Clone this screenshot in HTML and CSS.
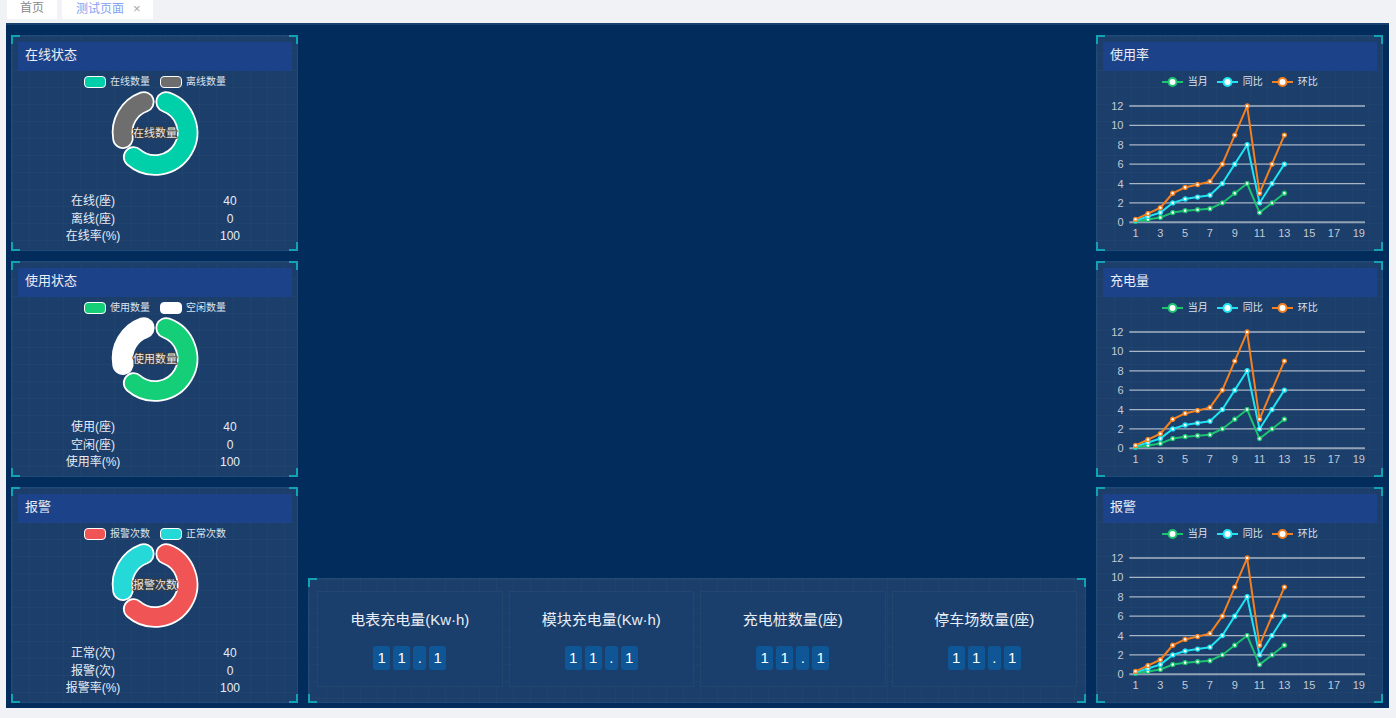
FILE: index.html
```html
<!DOCTYPE html>
<html lang="zh">
<head>
<meta charset="utf-8">
<title>测试页面</title>
<link rel="stylesheet" href="styles.css">
</head>
<body>
<div class="tabs">
  <div class="tab">首页</div>
  <div class="tab active">测试页面<span class="close">×</span></div>
</div>
<div class="main">
  <div class="side">
    <div class="panel">
      <div class="phead">在线状态</div>
      <div class="legend">
        <div class="li"><span class="sw" style="background:#00d0a9"></span>在线数量</div>
        <div class="li"><span class="sw" style="background:#6e6e6e"></span>离线数量</div>
      </div>
      <svg class="donut" viewBox="0 0 120 103">
        <path class="ow" d="M71.12 12.96 A32.5 32.5 0 1 1 38.68 68.03"/>
        <path class="seg" stroke="#00d0a9" d="M71.12 12.96 A32.5 32.5 0 1 1 38.68 68.03"/>
        <path class="ow" d="M27.99 49.14 A32.5 32.5 0 0 1 48.88 12.96"/>
        <path class="seg" stroke="#6e6e6e" d="M27.99 49.14 A32.5 32.5 0 0 1 48.88 12.96"/>
        <text class="dl" x="60" y="47.5">在线数量</text>
      </svg>
      <div class="stats">
        <div>在线(座)</div><div>40</div>
        <div>离线(座)</div><div>0</div>
        <div>在线率(%)</div><div>100</div>
      </div>
    </div>
    <div class="panel">
      <div class="phead">使用状态</div>
      <div class="legend">
        <div class="li"><span class="sw" style="background:#15cf78"></span>使用数量</div>
        <div class="li"><span class="sw" style="background:#ffffff"></span>空闲数量</div>
      </div>
      <svg class="donut" viewBox="0 0 120 103">
        <path class="ow" d="M71.12 12.96 A32.5 32.5 0 1 1 38.68 68.03"/>
        <path class="seg" stroke="#15cf78" d="M71.12 12.96 A32.5 32.5 0 1 1 38.68 68.03"/>
        <path class="ow" d="M27.99 49.14 A32.5 32.5 0 0 1 48.88 12.96"/>
        <path class="seg" stroke="#ffffff" d="M27.99 49.14 A32.5 32.5 0 0 1 48.88 12.96"/>
        <text class="dl" x="60" y="47.5">使用数量</text>
      </svg>
      <div class="stats">
        <div>使用(座)</div><div>40</div>
        <div>空闲(座)</div><div>0</div>
        <div>使用率(%)</div><div>100</div>
      </div>
    </div>
    <div class="panel">
      <div class="phead">报警</div>
      <div class="legend">
        <div class="li"><span class="sw" style="background:#f05454"></span>报警次数</div>
        <div class="li"><span class="sw" style="background:#26d9d9"></span>正常次数</div>
      </div>
      <svg class="donut" viewBox="0 0 120 103">
        <path class="ow" d="M71.12 12.96 A32.5 32.5 0 1 1 38.68 68.03"/>
        <path class="seg" stroke="#f05454" d="M71.12 12.96 A32.5 32.5 0 1 1 38.68 68.03"/>
        <path class="ow" d="M27.99 49.14 A32.5 32.5 0 0 1 48.88 12.96"/>
        <path class="seg" stroke="#26d9d9" d="M27.99 49.14 A32.5 32.5 0 0 1 48.88 12.96"/>
        <text class="dl" x="60" y="47.5">报警次数</text>
      </svg>
      <div class="stats">
        <div>正常(次)</div><div>40</div>
        <div>报警(次)</div><div>0</div>
        <div>报警率(%)</div><div>100</div>
      </div>
    </div>
  </div>

  <div class="center">
    <div class="panel summary">
      <div class="card">
        <div class="ctitle">电表充电量(Kw·h)</div>
        <div class="digits"><span class="d">1</span><span class="d">1</span><span class="d dot">.</span><span class="d">1</span></div>
      </div>
      <div class="card">
        <div class="ctitle">模块充电量(Kw·h)</div>
        <div class="digits"><span class="d">1</span><span class="d">1</span><span class="d dot">.</span><span class="d">1</span></div>
      </div>
      <div class="card">
        <div class="ctitle">充电桩数量(座)</div>
        <div class="digits"><span class="d">1</span><span class="d">1</span><span class="d dot">.</span><span class="d">1</span></div>
      </div>
      <div class="card">
        <div class="ctitle">停车场数量(座)</div>
        <div class="digits"><span class="d">1</span><span class="d">1</span><span class="d dot">.</span><span class="d">1</span></div>
      </div>
    </div>
  </div>

  <div class="side">
    <div class="panel">
      <div class="phead">使用率</div>
      <div class="legend lines">
        <div class="li"><svg class="lic" viewBox="0 0 21 12"><line x1="0" y1="6" x2="21" y2="6" stroke="#1cc46f" stroke-width="2"/><circle cx="10.5" cy="6" r="4" fill="#fff" stroke="#1cc46f" stroke-width="2"/></svg>当月</div>
        <div class="li"><svg class="lic" viewBox="0 0 21 12"><line x1="0" y1="6" x2="21" y2="6" stroke="#1ee4f2" stroke-width="2"/><circle cx="10.5" cy="6" r="4" fill="#fff" stroke="#1ee4f2" stroke-width="2"/></svg>同比</div>
        <div class="li"><svg class="lic" viewBox="0 0 21 12"><line x1="0" y1="6" x2="21" y2="6" stroke="#f5801f" stroke-width="2"/><circle cx="10.5" cy="6" r="4" fill="#fff" stroke="#f5801f" stroke-width="2"/></svg>环比</div>
      </div>
      <svg class="chart" viewBox="0 0 274 157">
        <defs>
          <marker id="g1" viewBox="0 0 6 6" refX="3" refY="3" markerWidth="6" markerHeight="6" markerUnits="userSpaceOnUse"><circle cx="3" cy="3" r="2" fill="#fff" stroke="#1cc46f" stroke-width="1.4"/></marker>
          <marker id="c1" viewBox="0 0 6 6" refX="3" refY="3" markerWidth="6" markerHeight="6" markerUnits="userSpaceOnUse"><circle cx="3" cy="3" r="2" fill="#fff" stroke="#1ee4f2" stroke-width="1.4"/></marker>
          <marker id="o1" viewBox="0 0 6 6" refX="3" refY="3" markerWidth="6" markerHeight="6" markerUnits="userSpaceOnUse"><circle cx="3" cy="3" r="2" fill="#fff" stroke="#f5801f" stroke-width="1.4"/></marker>
        </defs>
        <g class="grid">
          <line x1="26.3" x2="262" y1="18.02" y2="18.02"/>
          <line x1="26.3" x2="262" y1="37.4" y2="37.4"/>
          <line x1="26.3" x2="262" y1="56.78" y2="56.78"/>
          <line x1="26.3" x2="262" y1="76.16" y2="76.16"/>
          <line x1="26.3" x2="262" y1="95.54" y2="95.54"/>
          <line x1="26.3" x2="262" y1="114.92" y2="114.92"/>
        </g>
        <line class="axis" x1="26.3" x2="262" y1="134.3" y2="134.3"/>
        <g class="yl">
          <text x="20.5" y="22">12</text><text x="20.5" y="41.4">10</text><text x="20.5" y="60.8">8</text><text x="20.5" y="80.2">6</text><text x="20.5" y="99.5">4</text><text x="20.5" y="118.9">2</text><text x="20.5" y="138.3">0</text>
        </g>
        <g class="xl">
          <text x="32.5" y="149">1</text><text x="57.31" y="149">3</text><text x="82.12" y="149">5</text><text x="106.93" y="149">7</text><text x="131.74" y="149">9</text><text x="156.55" y="149">11</text><text x="181.36" y="149">13</text><text x="206.17" y="149">15</text><text x="230.98" y="149">17</text><text x="255.79" y="149">19</text>
        </g>
        <polyline class="ln" stroke="#1cc46f" marker-start="url(#g1)" marker-mid="url(#g1)" marker-end="url(#g1)" points="32.5,133.33 44.91,131.39 57.31,129.46 69.72,124.61 82.12,122.67 94.53,121.7 106.93,120.73 119.34,114.92 131.74,105.23 144.15,95.54 156.55,124.61 168.96,114.92 181.36,105.23"/>
        <polyline class="ln" stroke="#1ee4f2" marker-start="url(#c1)" marker-mid="url(#c1)" marker-end="url(#c1)" points="32.5,132.36 44.91,128.49 57.31,124.61 69.72,114.92 82.12,111.04 94.53,109.11 106.93,107.17 119.34,95.54 131.74,76.16 144.15,56.78 156.55,114.92 168.96,95.54 181.36,76.16"/>
        <polyline class="ln" stroke="#f5801f" marker-start="url(#o1)" marker-mid="url(#o1)" marker-end="url(#o1)" points="32.5,131.39 44.91,125.58 57.31,119.77 69.72,105.23 82.12,99.42 94.53,96.51 106.93,93.6 119.34,76.16 131.74,47.09 144.15,18.02 156.55,105.23 168.96,76.16 181.36,47.09"/>
      </svg>
    </div>
    <div class="panel">
      <div class="phead">充电量</div>
      <div class="legend lines">
        <div class="li"><svg class="lic" viewBox="0 0 21 12"><line x1="0" y1="6" x2="21" y2="6" stroke="#1cc46f" stroke-width="2"/><circle cx="10.5" cy="6" r="4" fill="#fff" stroke="#1cc46f" stroke-width="2"/></svg>当月</div>
        <div class="li"><svg class="lic" viewBox="0 0 21 12"><line x1="0" y1="6" x2="21" y2="6" stroke="#1ee4f2" stroke-width="2"/><circle cx="10.5" cy="6" r="4" fill="#fff" stroke="#1ee4f2" stroke-width="2"/></svg>同比</div>
        <div class="li"><svg class="lic" viewBox="0 0 21 12"><line x1="0" y1="6" x2="21" y2="6" stroke="#f5801f" stroke-width="2"/><circle cx="10.5" cy="6" r="4" fill="#fff" stroke="#f5801f" stroke-width="2"/></svg>环比</div>
      </div>
      <svg class="chart" viewBox="0 0 274 157">
        <defs>
          <marker id="g2" viewBox="0 0 6 6" refX="3" refY="3" markerWidth="6" markerHeight="6" markerUnits="userSpaceOnUse"><circle cx="3" cy="3" r="2" fill="#fff" stroke="#1cc46f" stroke-width="1.4"/></marker>
          <marker id="c2" viewBox="0 0 6 6" refX="3" refY="3" markerWidth="6" markerHeight="6" markerUnits="userSpaceOnUse"><circle cx="3" cy="3" r="2" fill="#fff" stroke="#1ee4f2" stroke-width="1.4"/></marker>
          <marker id="o2" viewBox="0 0 6 6" refX="3" refY="3" markerWidth="6" markerHeight="6" markerUnits="userSpaceOnUse"><circle cx="3" cy="3" r="2" fill="#fff" stroke="#f5801f" stroke-width="1.4"/></marker>
        </defs>
        <g class="grid">
          <line x1="26.3" x2="262" y1="18.02" y2="18.02"/>
          <line x1="26.3" x2="262" y1="37.4" y2="37.4"/>
          <line x1="26.3" x2="262" y1="56.78" y2="56.78"/>
          <line x1="26.3" x2="262" y1="76.16" y2="76.16"/>
          <line x1="26.3" x2="262" y1="95.54" y2="95.54"/>
          <line x1="26.3" x2="262" y1="114.92" y2="114.92"/>
        </g>
        <line class="axis" x1="26.3" x2="262" y1="134.3" y2="134.3"/>
        <g class="yl">
          <text x="20.5" y="22">12</text><text x="20.5" y="41.4">10</text><text x="20.5" y="60.8">8</text><text x="20.5" y="80.2">6</text><text x="20.5" y="99.5">4</text><text x="20.5" y="118.9">2</text><text x="20.5" y="138.3">0</text>
        </g>
        <g class="xl">
          <text x="32.5" y="149">1</text><text x="57.31" y="149">3</text><text x="82.12" y="149">5</text><text x="106.93" y="149">7</text><text x="131.74" y="149">9</text><text x="156.55" y="149">11</text><text x="181.36" y="149">13</text><text x="206.17" y="149">15</text><text x="230.98" y="149">17</text><text x="255.79" y="149">19</text>
        </g>
        <polyline class="ln" stroke="#1cc46f" marker-start="url(#g2)" marker-mid="url(#g2)" marker-end="url(#g2)" points="32.5,133.33 44.91,131.39 57.31,129.46 69.72,124.61 82.12,122.67 94.53,121.7 106.93,120.73 119.34,114.92 131.74,105.23 144.15,95.54 156.55,124.61 168.96,114.92 181.36,105.23"/>
        <polyline class="ln" stroke="#1ee4f2" marker-start="url(#c2)" marker-mid="url(#c2)" marker-end="url(#c2)" points="32.5,132.36 44.91,128.49 57.31,124.61 69.72,114.92 82.12,111.04 94.53,109.11 106.93,107.17 119.34,95.54 131.74,76.16 144.15,56.78 156.55,114.92 168.96,95.54 181.36,76.16"/>
        <polyline class="ln" stroke="#f5801f" marker-start="url(#o2)" marker-mid="url(#o2)" marker-end="url(#o2)" points="32.5,131.39 44.91,125.58 57.31,119.77 69.72,105.23 82.12,99.42 94.53,96.51 106.93,93.6 119.34,76.16 131.74,47.09 144.15,18.02 156.55,105.23 168.96,76.16 181.36,47.09"/>
      </svg>
    </div>
    <div class="panel">
      <div class="phead">报警</div>
      <div class="legend lines">
        <div class="li"><svg class="lic" viewBox="0 0 21 12"><line x1="0" y1="6" x2="21" y2="6" stroke="#1cc46f" stroke-width="2"/><circle cx="10.5" cy="6" r="4" fill="#fff" stroke="#1cc46f" stroke-width="2"/></svg>当月</div>
        <div class="li"><svg class="lic" viewBox="0 0 21 12"><line x1="0" y1="6" x2="21" y2="6" stroke="#1ee4f2" stroke-width="2"/><circle cx="10.5" cy="6" r="4" fill="#fff" stroke="#1ee4f2" stroke-width="2"/></svg>同比</div>
        <div class="li"><svg class="lic" viewBox="0 0 21 12"><line x1="0" y1="6" x2="21" y2="6" stroke="#f5801f" stroke-width="2"/><circle cx="10.5" cy="6" r="4" fill="#fff" stroke="#f5801f" stroke-width="2"/></svg>环比</div>
      </div>
      <svg class="chart" viewBox="0 0 274 157">
        <defs>
          <marker id="g3" viewBox="0 0 6 6" refX="3" refY="3" markerWidth="6" markerHeight="6" markerUnits="userSpaceOnUse"><circle cx="3" cy="3" r="2" fill="#fff" stroke="#1cc46f" stroke-width="1.4"/></marker>
          <marker id="c3" viewBox="0 0 6 6" refX="3" refY="3" markerWidth="6" markerHeight="6" markerUnits="userSpaceOnUse"><circle cx="3" cy="3" r="2" fill="#fff" stroke="#1ee4f2" stroke-width="1.4"/></marker>
          <marker id="o3" viewBox="0 0 6 6" refX="3" refY="3" markerWidth="6" markerHeight="6" markerUnits="userSpaceOnUse"><circle cx="3" cy="3" r="2" fill="#fff" stroke="#f5801f" stroke-width="1.4"/></marker>
        </defs>
        <g class="grid">
          <line x1="26.3" x2="262" y1="18.02" y2="18.02"/>
          <line x1="26.3" x2="262" y1="37.4" y2="37.4"/>
          <line x1="26.3" x2="262" y1="56.78" y2="56.78"/>
          <line x1="26.3" x2="262" y1="76.16" y2="76.16"/>
          <line x1="26.3" x2="262" y1="95.54" y2="95.54"/>
          <line x1="26.3" x2="262" y1="114.92" y2="114.92"/>
        </g>
        <line class="axis" x1="26.3" x2="262" y1="134.3" y2="134.3"/>
        <g class="yl">
          <text x="20.5" y="22">12</text><text x="20.5" y="41.4">10</text><text x="20.5" y="60.8">8</text><text x="20.5" y="80.2">6</text><text x="20.5" y="99.5">4</text><text x="20.5" y="118.9">2</text><text x="20.5" y="138.3">0</text>
        </g>
        <g class="xl">
          <text x="32.5" y="149">1</text><text x="57.31" y="149">3</text><text x="82.12" y="149">5</text><text x="106.93" y="149">7</text><text x="131.74" y="149">9</text><text x="156.55" y="149">11</text><text x="181.36" y="149">13</text><text x="206.17" y="149">15</text><text x="230.98" y="149">17</text><text x="255.79" y="149">19</text>
        </g>
        <polyline class="ln" stroke="#1cc46f" marker-start="url(#g3)" marker-mid="url(#g3)" marker-end="url(#g3)" points="32.5,133.33 44.91,131.39 57.31,129.46 69.72,124.61 82.12,122.67 94.53,121.7 106.93,120.73 119.34,114.92 131.74,105.23 144.15,95.54 156.55,124.61 168.96,114.92 181.36,105.23"/>
        <polyline class="ln" stroke="#1ee4f2" marker-start="url(#c3)" marker-mid="url(#c3)" marker-end="url(#c3)" points="32.5,132.36 44.91,128.49 57.31,124.61 69.72,114.92 82.12,111.04 94.53,109.11 106.93,107.17 119.34,95.54 131.74,76.16 144.15,56.78 156.55,114.92 168.96,95.54 181.36,76.16"/>
        <polyline class="ln" stroke="#f5801f" marker-start="url(#o3)" marker-mid="url(#o3)" marker-end="url(#o3)" points="32.5,131.39 44.91,125.58 57.31,119.77 69.72,105.23 82.12,99.42 94.53,96.51 106.93,93.6 119.34,76.16 131.74,47.09 144.15,18.02 156.55,105.23 168.96,76.16 181.36,47.09"/>
      </svg>
    </div>
  </div>
</div>
</body>
</html>
```

FILE: styles.css
```css
* { box-sizing: border-box; }

html, body {
  margin: 0;
  padding: 0;
}

body {
  width: 1396px;
  height: 718px;
  overflow: hidden;
  background: #f0f2f5;
  font-family: "Liberation Sans", "Noto Sans CJK SC", sans-serif;
}

/* ---------- tab bar ---------- */
.tabs {
  height: 23px;
  display: flex;
  gap: 5px;
  padding-left: 7px;
}

.tab {
  height: 19px;
  background: #ffffff;
  font-size: 12px;
  line-height: 17px;
  color: #8a8a8a;
  padding: 0 13px;
  white-space: nowrap;
}

.tab.active {
  color: #86a0f2;
  padding: 0 12px 0 14px;
}

.close {
  margin-left: 9px;
  color: #a8a8a8;
  font-size: 13px;
}

/* ---------- main area ---------- */
.main {
  margin-left: 6px;
  width: 1383px;
  height: 685px;
  background: #022c5c;
  border-top: 2px solid #17406f;
  padding: 10px 6px 5px 5px;
  display: grid;
  grid-template-columns: 287px 778px 287px;
  column-gap: 10px;
}

.side {
  display: flex;
  flex-direction: column;
  gap: 10px;
}

.center {
  display: flex;
  flex-direction: column;
  justify-content: flex-end;
}

/* ---------- panel ---------- */
.panel {
  position: relative;
  background-color: #1b3e6b;
  background-image:
    linear-gradient(rgba(255, 255, 255, 0.022) 1px, transparent 1px),
    linear-gradient(90deg, rgba(255, 255, 255, 0.022) 1px, transparent 1px);
  background-size: 17px 17px;
  border: 1px solid #1f4b76;
}

.panel::after {
  content: "";
  position: absolute;
  inset: -1px;
  pointer-events: none;
  background:
    linear-gradient(#12a2b4, #12a2b4) left top / 9px 2px no-repeat,
    linear-gradient(#12a2b4, #12a2b4) left top / 2px 9px no-repeat,
    linear-gradient(#12a2b4, #12a2b4) right top / 9px 2px no-repeat,
    linear-gradient(#12a2b4, #12a2b4) right top / 2px 9px no-repeat,
    linear-gradient(#12a2b4, #12a2b4) left bottom / 9px 2px no-repeat,
    linear-gradient(#12a2b4, #12a2b4) left bottom / 2px 9px no-repeat,
    linear-gradient(#12a2b4, #12a2b4) right bottom / 9px 2px no-repeat,
    linear-gradient(#12a2b4, #12a2b4) right bottom / 2px 9px no-repeat;
}

.side .panel {
  height: 216px;
  padding: 6px 5px 0 6px;
}

.phead {
  height: 29px;
  background: #1c428a;
  color: #e9eef7;
  font-size: 13px;
  line-height: 25px;
  padding-left: 7px;
}

/* ---------- legends ---------- */
.legend {
  display: flex;
  justify-content: center;
  align-items: center;
  gap: 10px;
  margin-top: 5px;
  height: 12px;
  font-size: 10px;
  line-height: 12px;
  color: #dde4ee;
}

.legend.lines {
  gap: 9.5px;
}

.li {
  display: flex;
  align-items: center;
  gap: 4px;
  white-space: nowrap;
}

.legend.lines .li {
  gap: 4.5px;
}

.sw {
  display: block;
  width: 22px;
  height: 12px;
  border: 1.5px solid #ffffff;
  border-radius: 4px;
}

.lic {
  display: block;
  width: 21px;
  height: 12px;
  overflow: visible;
}

/* ---------- donut ---------- */
.donut {
  display: block;
  margin: 0 auto;
  width: 120px;
  height: 105px;
  overflow: visible;
}

.ow {
  fill: none;
  stroke: #ffffff;
  stroke-width: 21.5;
  stroke-linecap: round;
}

.seg {
  fill: none;
  stroke-width: 18;
  stroke-linecap: round;
}

.dl {
  font-family: "Noto Sans CJK SC", sans-serif;
  font-size: 11px;
  fill: #e8e8e8;
  stroke: #3c3c3c;
  stroke-width: 2px;
  stroke-linejoin: round;
  paint-order: stroke;
  text-anchor: middle;
}

.stats {
  display: grid;
  grid-template-columns: 150px 124px;
  font-size: 12px;
  line-height: 17.5px;
  color: #e6ecf5;
  text-align: center;
}

/* ---------- line chart ---------- */
.chart {
  display: block;
  width: 274px;
  height: 157px;
  overflow: visible;
}

.grid line {
  stroke: #a9b4c4;
  stroke-width: 1.3;
}

.axis {
  stroke: #93a2b6;
  stroke-width: 2;
}

.yl text,
.xl text {
  font-family: "Liberation Sans", sans-serif;
  font-size: 11px;
  fill: #c3cad5;
}

.yl text { text-anchor: end; }
.xl text { text-anchor: middle; }

.ln {
  fill: none;
  stroke-width: 2;
  stroke-linejoin: round;
}

/* ---------- summary ---------- */
.summary {
  height: 125px;
  padding: 12px 8px 15px 8px;
  display: grid;
  grid-template-columns: repeat(4, 1fr);
  gap: 6px;
}

.card {
  background: #1b3f6c;
  border: 1px solid #22476f;
  display: flex;
  flex-direction: column;
  align-items: center;
}

.ctitle {
  margin-top: 18px;
  font-size: 15px;
  line-height: 20px;
  color: #e8eef6;
  white-space: nowrap;
}

.digits {
  display: flex;
  gap: 3px;
  margin-top: 16px;
}

.d {
  display: block;
  width: 17px;
  height: 24px;
  background: #0f5696;
  border-radius: 3px;
  color: #ffffff;
  font-size: 15px;
  line-height: 24px;
  text-align: center;
}

.d.dot {
  width: 13px;
}
```
